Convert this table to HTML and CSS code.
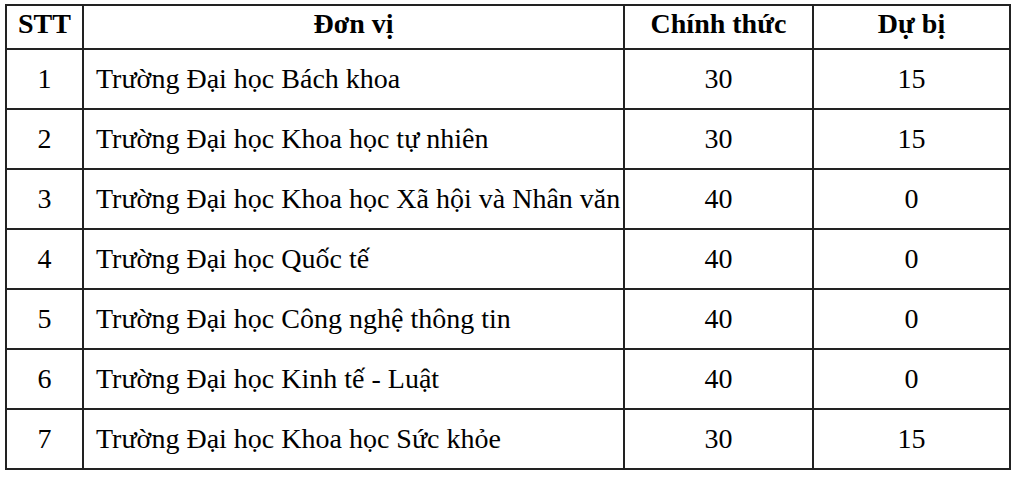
FILE: index.html
```html
<!DOCTYPE html>
<html lang="vi">
<head>
<meta charset="utf-8">
<title>Bảng chỉ tiêu</title>
<link rel="stylesheet" href="styles.css">
</head>
<body>
<table class="quota">
  <colgroup>
    <col class="c-stt">
    <col class="c-name">
    <col class="c-main">
    <col class="c-res">
  </colgroup>
  <thead>
    <tr class="head-row">
      <th>STT</th>
      <th>Đơn vị</th>
      <th>Chính thức</th>
      <th>Dự bị</th>
    </tr>
  </thead>
  <tbody>
    <tr><td class="num">1</td><td class="name">Trường Đại học Bách khoa</td><td class="num">30</td><td class="num">15</td></tr>
    <tr><td class="num">2</td><td class="name">Trường Đại học Khoa học tự nhiên</td><td class="num">30</td><td class="num">15</td></tr>
    <tr><td class="num">3</td><td class="name">Trường Đại học Khoa học Xã hội và Nhân văn</td><td class="num">40</td><td class="num">0</td></tr>
    <tr><td class="num">4</td><td class="name">Trường Đại học Quốc tế</td><td class="num">40</td><td class="num">0</td></tr>
    <tr><td class="num">5</td><td class="name">Trường Đại học Công nghệ thông tin</td><td class="num">40</td><td class="num">0</td></tr>
    <tr><td class="num">6</td><td class="name">Trường Đại học Kinh tế - Luật</td><td class="num">40</td><td class="num">0</td></tr>
    <tr><td class="num">7</td><td class="name">Trường Đại học Khoa học Sức khỏe</td><td class="num">30</td><td class="num">15</td></tr>
  </tbody>
</table>
</body>
</html>
```

FILE: styles.css
```css
html, body {
  margin: 0;
  padding: 0;
  background: #ffffff;
}

body {
  padding: 4px 0 0 5px;
  font-family: "Liberation Serif", "Times New Roman", serif;
  color: #000000;
}

.quota {
  border-collapse: collapse;
  table-layout: fixed;
  width: 1004px;
  font-size: 28px;
}

.c-stt { width: 77px; }
.c-name { width: 541px; }
.c-main { width: 189px; }
.c-res { width: 197px; }

.quota th,
.quota td {
  border: 2px solid #222222;
  padding: 0;
  line-height: 1;
  vertical-align: middle;
}

.quota th {
  font-weight: bold;
  text-align: center;
  padding-bottom: 6px;
}

.head-row { height: 44px; }

.quota tbody tr { height: 60px; }

.quota td.num { text-align: center; }

.quota td.name {
  text-align: left;
  padding-left: 12px;
  white-space: nowrap;
}
```
